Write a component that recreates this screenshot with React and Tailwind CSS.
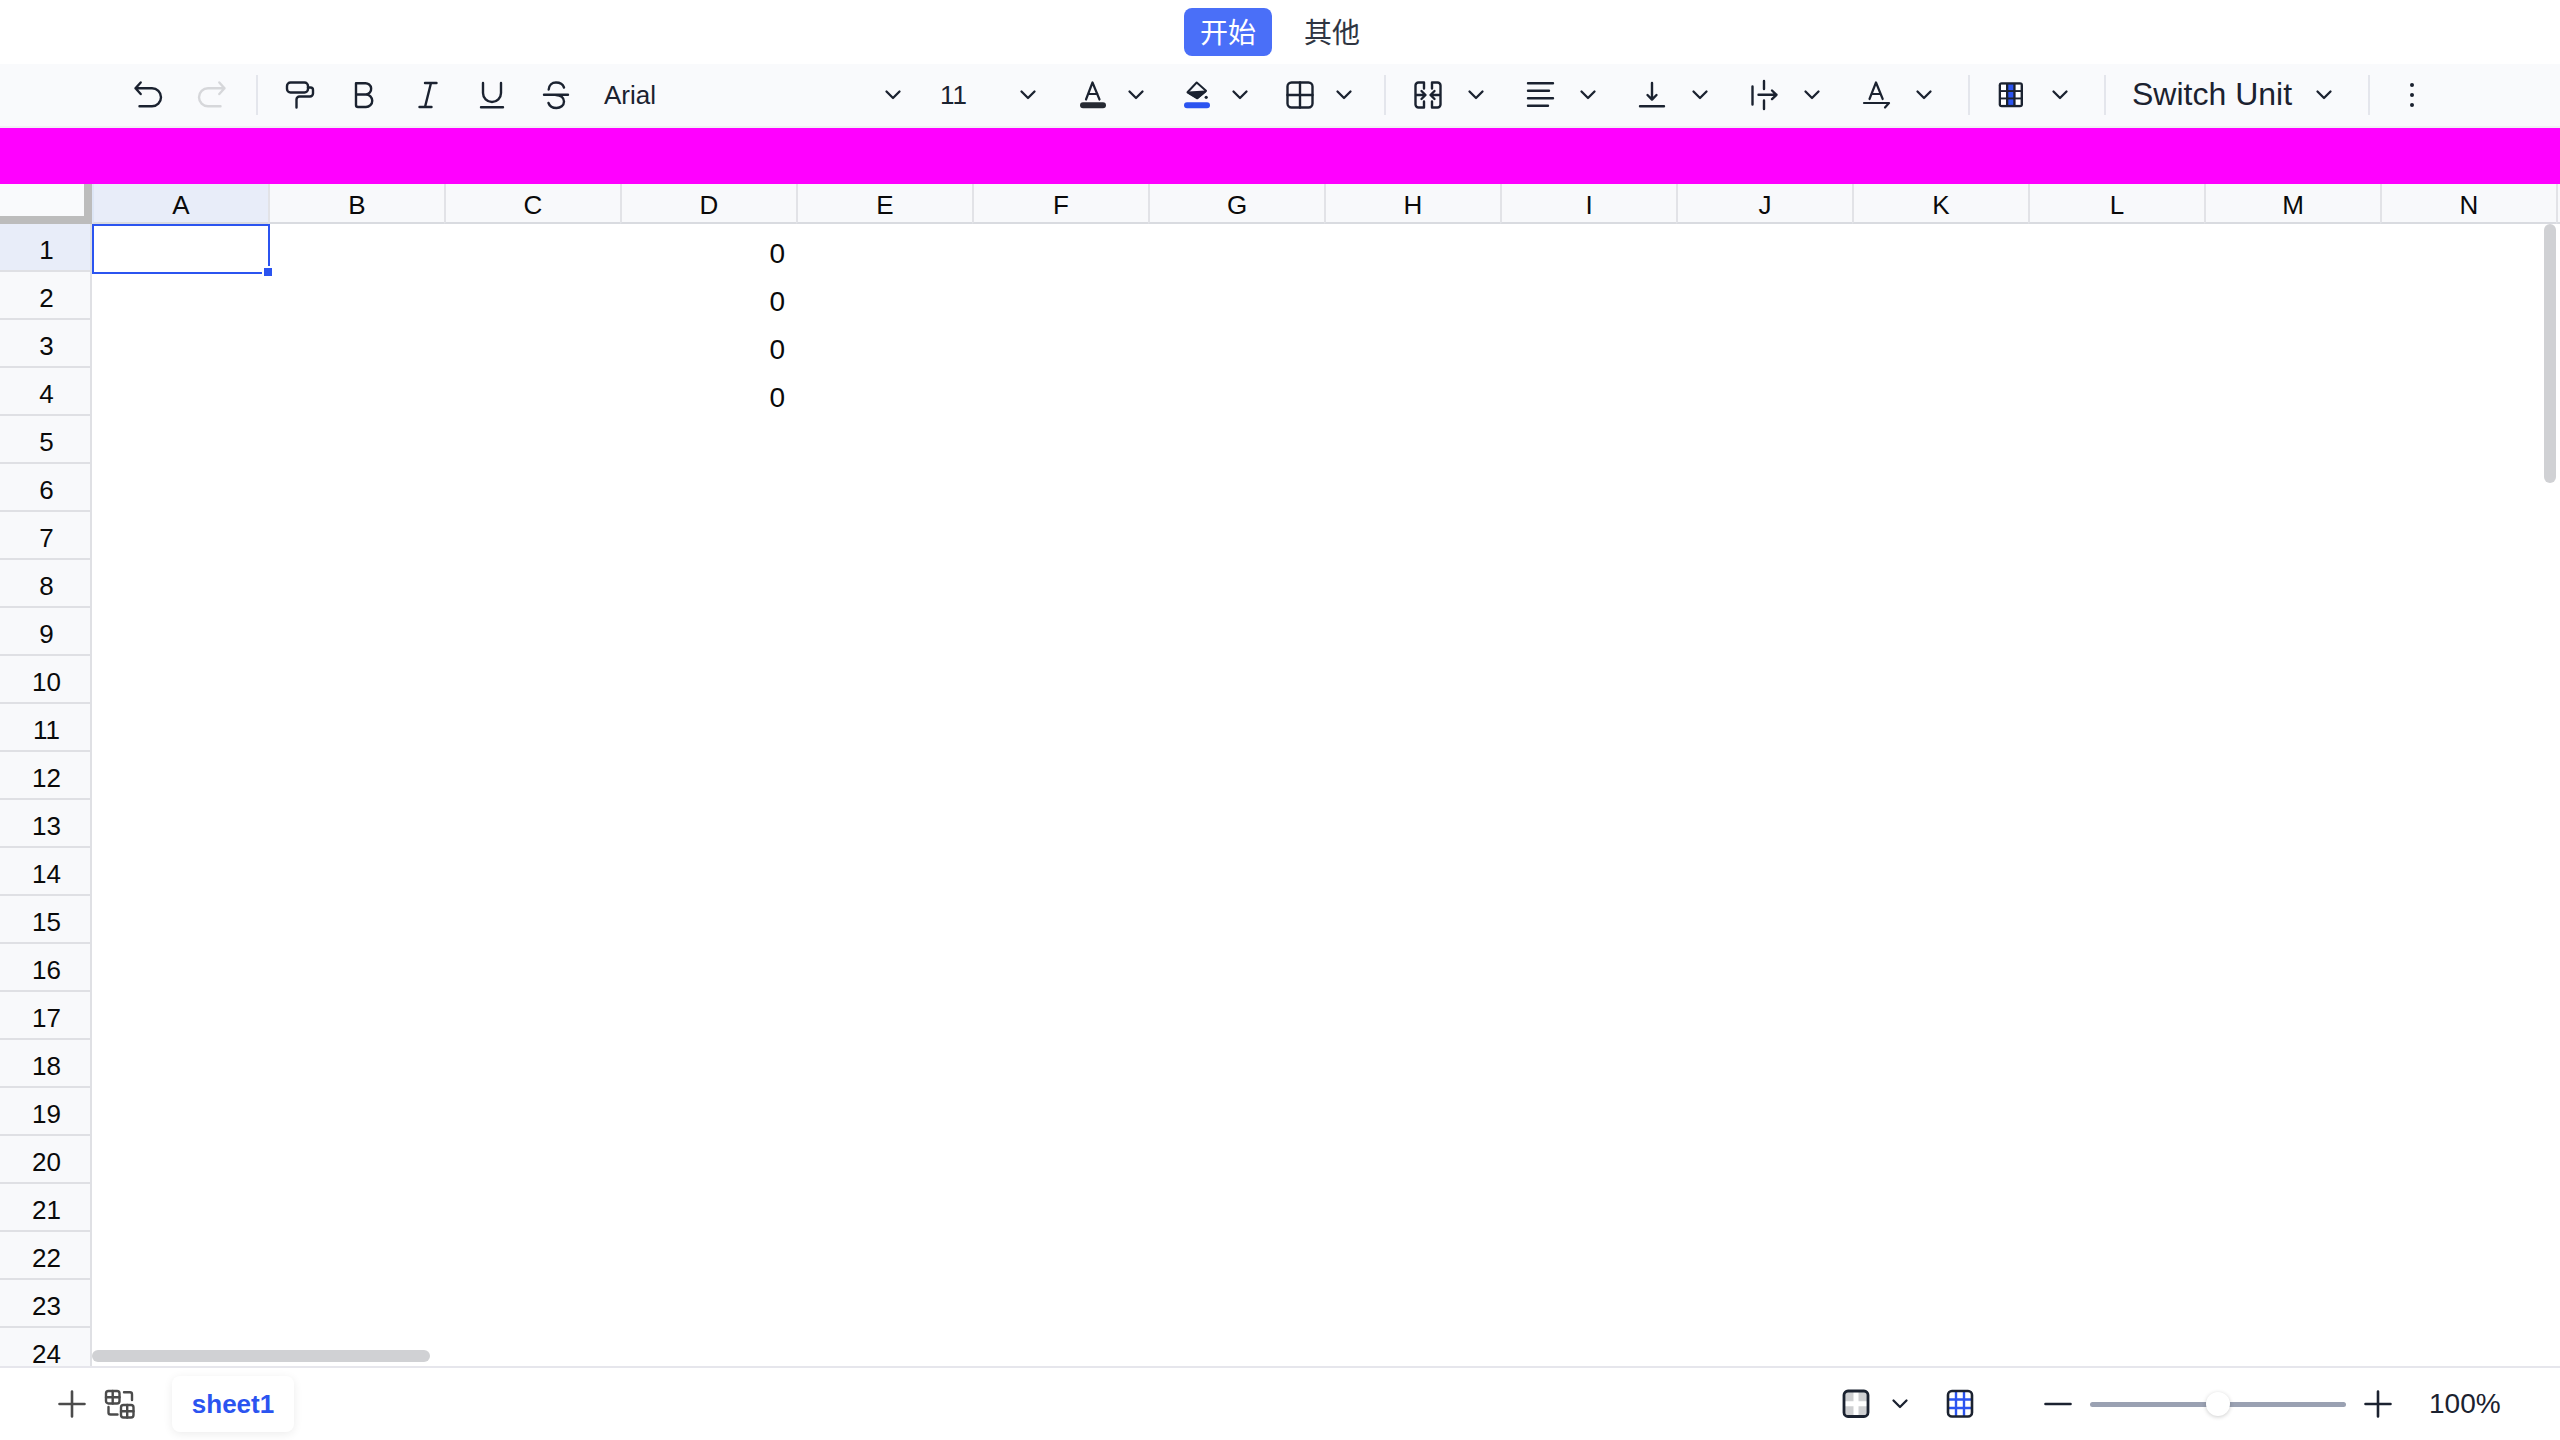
import React from "react";

const DARK = "#1b2230";
const FONT = { fontFamily: '"Liberation Sans", "Noto Sans CJK SC", sans-serif' };

function Ico({ children, className = "", color = DARK, sw = 2.4 }) {
  return (
    <svg viewBox="0 0 32 32" fill="none" stroke={color} strokeWidth={sw} strokeLinecap="round" strokeLinejoin="round" className={"w-8 h-8 shrink-0 " + className}>
      {children}
    </svg>
  );
}

function Chevron({ className = "" }) {
  return (
    <svg viewBox="0 0 24 24" fill="none" stroke={DARK} strokeWidth="2.3" strokeLinecap="round" strokeLinejoin="round" className={"w-6 h-6 shrink-0 " + className}>
      <path d="M5.5 8.5 12 15l6.5-6.5" />
    </svg>
  );
}

const Sep = ({ className = "" }) => <div className={"w-[2px] h-10 bg-[#e4e6ec] shrink-0 " + className} />;

function Toolbar() {
  return (
    <div className="flex items-center h-16 pl-[132px] bg-[#f9fafc] border-b-2 border-[#f0f1f4] box-border text-[#1b2230]">
      <Ico><path d="M8.7 3.5 3.5 9.3 8.7 15M3.5 9.3H20a9 9 0 0 1 0 18H7.5" /></Ico>
      <Ico className="ml-8" color="#d6d7da"><path d="M23.3 3.5l5.2 5.8-5.2 5.7M28.5 9.3H12a9 9 0 0 0 0 18h12.5" /></Ico>
      <Sep className="ml-[28px]" />
      <Ico className="ml-[26px]">
        <rect x="3" y="3.5" width="21" height="10" rx="3.5" />
        <path d="M24 8.5h2.5a2.5 2.5 0 0 1 2.5 2.5v3.5a3 3 0 0 1-3 3H15.5a3 3 0 0 0-3 3V28.5" />
      </Ico>
      <Ico className="ml-8"><path d="M8 15.5h10a6 6 0 0 1 0 12.5h-8a2 2 0 0 1-2-2V4.2h9a5.6 5.6 0 0 1 1 11.3" /></Ico>
      <Ico className="ml-8"><path d="M13 4h11.5M7.5 28h12M19 4l-6 24" /></Ico>
      <Ico className="ml-8"><path d="M7 4v10a9 9 0 0 0 18 0V4M5 28.3h22" /></Ico>
      <Ico className="ml-8"><path d="M4 15.8h24M8.7 10.5C9 6 12 3.5 16 3.5c4 0 7 2 8 5M16 16c5 0 8 3 8 6.5 0 4-3.5 6.5-7.5 6.5-4 0-7-2-8-5" /></Ico>

      <div className="ml-8 w-[301px] flex items-center justify-between shrink-0">
        <span className="text-[26px] leading-none">Arial</span>
        <Chevron />
      </div>
      <div className="ml-[35px] w-[100px] flex items-center justify-between shrink-0">
        <span className="text-[26px] leading-none">11</span>
        <Chevron />
      </div>

      <Ico className="ml-[36px]" sw={2.2}>
        <path d="M10 20.5 16.5 3.5 23.5 20.5M12 15h9.5" />
        <rect x="4" y="23.3" width="26" height="6" rx="3" fill="#262a33" stroke="none" />
      </Ico>
      <Chevron className="ml-4" />
      <Ico className="ml-[33px]" sw={2}>
        <path d="M15.7 3.5 25 11.7 16.3 19.3 6.5 13.3 Z" />
        <path d="M7.5 13.6 24.5 12.4 16.3 19 Z" fill={DARK} />
        <circle cx="25.2" cy="18.3" r="1.6" fill={DARK} stroke="none" />
        <rect x="3" y="23.3" width="26" height="6" rx="3" fill="#2b54f0" stroke="none" />
      </Ico>
      <Chevron className="ml-[15px]" />
      <Ico className="ml-8">
        <rect x="3.5" y="3.5" width="25" height="25" rx="4" />
        <path d="M16 3.5v25M3.5 16h25" />
      </Ico>
      <Chevron className="ml-4" />
      <Sep className="ml-[28px]" />
      <Ico className="ml-[26px]">
        <path d="M12 3.5H6.5a3 3 0 0 0-3 3v19a3 3 0 0 0 3 3H12M12 3.5V9.5M12 22.5v6M3.5 16H13M9.5 12l4 4-4 4" />
        <path d="M20 3.5h5.5a3 3 0 0 1 3 3v19a3 3 0 0 1-3 3H20M20 3.5V9.5M20 22.5v6M28.5 16H19M22.5 12l-4 4 4 4" />
      </Ico>
      <Chevron className="ml-5" />
      <Ico className="ml-9"><path d="M4 4.3h25M4 11.7h21M4 19.3h25M4 26.7h20" /></Ico>
      <Chevron className="ml-5" />
      <Ico className="ml-9"><path d="M16 4v16.5M11.5 16l4.5 4.7 4.5-4.7M4 27.3h24" /></Ico>
      <Chevron className="ml-5" />
      <Ico className="ml-9"><path d="M4.5 7.5v18M16 2v8M16 21.5V30M10.5 15.8h18M24 11.5l4.5 4.3-4.5 4.3" /></Ico>
      <Chevron className="ml-5" />
      <Ico className="ml-9" sw={2.2}><path d="M9.5 20 16 3.5 22.7 20M11.5 15h9M4 24h25l-4 4.5" /></Ico>
      <Chevron className="ml-5" />
      <Sep className="ml-[32px]" />
      <svg viewBox="0 0 32 32" className="w-8 h-8 shrink-0 ml-[24px]">
        <rect x="4.7" y="3.3" width="24.3" height="25" rx="3" fill={DARK} />
        <rect x="7" y="5.6" width="5" height="5.5" fill="#fff" />
        <rect x="14.3" y="5.6" width="5" height="5.5" fill="#2b54f0" />
        <rect x="21.6" y="5.6" width="5" height="5.5" fill="#fff" />
        <rect x="7" y="13" width="5" height="5.5" fill="#fff" />
        <rect x="14.3" y="13" width="5" height="5.5" fill="#2b54f0" />
        <rect x="21.6" y="13" width="5" height="5.5" fill="#fff" />
        <rect x="7" y="20.4" width="5" height="5.5" fill="#fff" />
        <rect x="14.3" y="20.4" width="5" height="5.5" fill="#2b54f0" />
        <rect x="21.6" y="20.4" width="5" height="5.5" fill="#fff" />
      </svg>
      <Chevron className="ml-[22px]" />
      <Sep className="ml-[32px]" />
      <span className="ml-[26px] pb-[3px] text-[32px] leading-none w-[160px] whitespace-nowrap shrink-0">Switch Unit</span>
      <Chevron className="ml-[20px]" />
      <Sep className="ml-[32px]" />
      <svg viewBox="0 0 32 32" className="w-8 h-8 shrink-0 ml-[26px]" fill={DARK}>
        <circle cx="16" cy="6" r="2" />
        <circle cx="16" cy="16" r="2" />
        <circle cx="16" cy="26" r="2" />
      </svg>
    </div>
  );
}

const COLS = ["A", "B", "C", "D", "E", "F", "G", "H", "I", "J", "K", "L", "M", "N"];
const ROWS = Array.from({ length: 24 }, (_, i) => i + 1);

function Grid() {
  return (
    <div className="relative flex-1 min-h-0 overflow-hidden bg-white text-[26px] leading-none text-[#0a0a0a]">
      <div className="flex h-10 bg-[#f8f9fb]">
        <div className="w-[92px] h-10 shrink-0 box-border bg-[#f9fafc] border-r-8 border-b-8 border-[#bcbcbc]" />
        {COLS.map((c) => (
          <div
            key={c}
            className={
              "w-[176px] h-10 shrink-0 box-border flex items-center justify-center pt-[4px] border-l-2 border-b-2 border-b-[#d9dbe0] " +
              (c === "A" ? "bg-[#e8edf9] border-l-[#dde6f6]" : "border-l-[#e2e3e7]")
            }
          >
            {c}
          </div>
        ))}
        <div className="flex-1 border-l-2 border-l-[#e2e3e7] border-b-2 border-b-[#d9dbe0]" />
      </div>
      {ROWS.map((r) => (
        <div key={r} className="flex h-12">
          <div
            className={
              "w-[92px] h-12 shrink-0 box-border flex items-center justify-center pl-[3px] pt-[5px] border-r-2 border-r-[#dfe0e4] border-b-2 border-b-[#dfe0e4] " +
              (r === 1 ? "bg-[#e8edf9]" : "bg-[#f8f9fb]")
            }
          >
            {r}
          </div>
          <div className="w-[176px] h-12 shrink-0 relative">
            {r === 1 && (
              <div className="absolute left-0 top-0 w-[178px] h-[50px] box-border border-2 border-[#2b54f0]">
                <div className="absolute left-[168px] top-[40px] w-3 h-3 box-border bg-[#2b54f0] border-2 border-white" />
              </div>
            )}
          </div>
          <div className="w-[352px] h-12 shrink-0" />
          <div className="w-[176px] h-12 shrink-0 flex items-center justify-end pr-[11px] pt-[11px] text-[28px]">{r <= 4 ? "0" : ""}</div>
        </div>
      ))}
      <div className="absolute left-[92px] bottom-1 w-[338px] h-3 rounded-md bg-[#d0d1d4]" />
      <div className="absolute right-1 top-10 w-3 h-[259px] rounded-md bg-[#d0d1d4]" />
    </div>
  );
}

function Footer() {
  return (
    <div className="flex items-center h-[74px] shrink-0 border-t-2 border-[#e6e6ec] bg-white pl-[56px] pr-[59px] box-border text-[#1b2230]">
      <Ico color="#4b4b4b" sw={2.6}><path d="M16 3.5v25M3.5 16h25" /></Ico>
      <Ico className="ml-4" color="#4b4b4b" sw={2.4}>
        <rect x="2" y="3" width="13.5" height="12.5" rx="2.5" />
        <path d="M8.7 3v12.5M2 9.2h13.5" />
        <rect x="17" y="17" width="12.5" height="12.5" rx="2.5" />
        <path d="M23.2 17v12.5M17 23.2h12.5" />
        <path d="M20 4.3h6a2 2 0 0 1 2 2V12M4.5 19v5.5a2 2 0 0 0 2 2h7" />
      </Ico>
      <div className="ml-9 w-[122px] h-14 flex items-center justify-center rounded-lg bg-white shadow-[0_2px_10px_rgba(0,0,0,0.08)] text-[26px] font-bold text-[#2b54f0]">
        sheet1
      </div>
      <svg viewBox="0 0 32 32" fill="none" className="w-8 h-8 shrink-0 ml-auto">
        <rect x="4" y="3" width="24" height="25.5" rx="4" fill="#cfd0d2" />
        <path d="M16 3v25.5M4 15.7h24" stroke="#fff" strokeWidth="5" />
        <rect x="4" y="3" width="24" height="25.5" rx="4" stroke={DARK} strokeWidth="2.8" />
      </svg>
      <Chevron className="ml-4" />
      <svg viewBox="0 0 32 32" fill="none" className="w-8 h-8 shrink-0 ml-8">
        <rect x="4" y="3" width="24" height="25.5" rx="4" fill="#fff" />
        <path d="M12 3v25.5M20 3v25.5M4 11.5h24M4 20h24" stroke="#2b54f0" strokeWidth="2.4" />
        <rect x="4" y="3" width="24" height="25.5" rx="4" stroke={DARK} strokeWidth="2.6" />
      </svg>
      <Ico className="ml-[66px]" sw={2.6}><path d="M3.5 16h25" /></Ico>
      <div className="relative ml-4 w-64 h-[5px] rounded-full bg-[#9aa1b2] shrink-0">
        <div className="absolute left-[116px] -top-[10px] w-6 h-6 rounded-full bg-white shadow-[0_1px_4px_rgba(0,0,0,0.2)]" />
      </div>
      <Ico className="ml-4" sw={2.6}><path d="M16 3.5v25M3.5 16h25" /></Ico>
      <span className="ml-[35px] w-[72px] text-[28px] leading-none whitespace-nowrap shrink-0">100%</span>
    </div>
  );
}

export default function App() {
  return (
    <div style={FONT} className="w-[2560px] h-[1440px] flex flex-col overflow-hidden bg-white">
      <div className="h-16 shrink-0 flex items-center justify-center gap-4 text-[28px] leading-none">
        <button className="w-[88px] h-12 pt-[3px] rounded-lg bg-[#4a6ff8] text-white flex items-center justify-center">开始</button>
        <button className="w-[88px] h-12 pt-[3px] rounded-lg text-[#2f3542] flex items-center justify-center">其他</button>
      </div>
      <Toolbar />
      <div className="h-14 shrink-0 bg-[#ff00ff]" />
      <Grid />
      <Footer />
    </div>
  );
}
